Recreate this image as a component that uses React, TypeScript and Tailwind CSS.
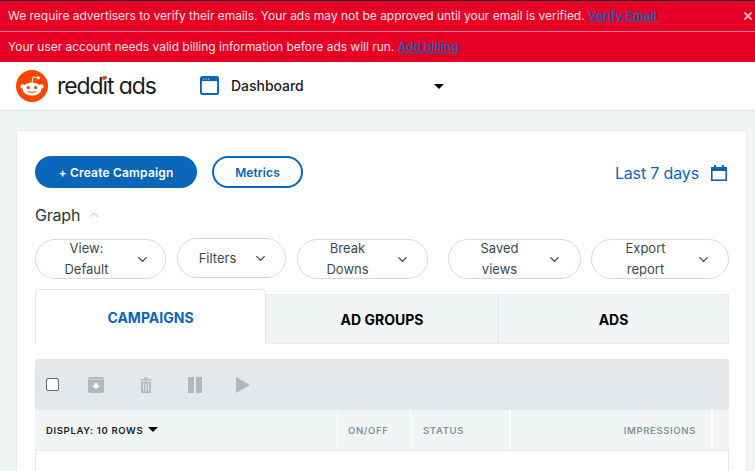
import React from 'react';
import { ChevronDown, ChevronUp, X } from 'lucide-react';

function Pill({ lines, className }: { lines: string[]; className: string }) {
  return (
    <button className={`flex h-10 shrink-0 items-center justify-between rounded-[20px] border border-[#d5dcdf] bg-white text-[13px] leading-[21px] text-[#3c4a50] ${className}`}>
      <span className="flex-1 text-center">
        {lines.map((l) => (
          <span key={l} className="block">{l}</span>
        ))}
      </span>
      <ChevronDown className="h-[15px] w-[15px] text-[#3c4a50]" strokeWidth={2.2} />
    </button>
  );
}

function Snoo() {
  return (
    <svg viewBox="0 0 32 32" className="h-8 w-8 shrink-0">
      <circle cx="16" cy="16" r="16" fill="#ff4500" />
      <circle cx="6.6" cy="16.4" r="2.2" fill="#fff" />
      <circle cx="25.4" cy="16.4" r="2.2" fill="#fff" />
      <ellipse cx="16" cy="19" rx="9.4" ry="6.6" fill="#fff" />
      <path d="M16 12.6 17.2 6.8l4 .9" fill="none" stroke="#fff" strokeWidth="1" />
      <circle cx="22.4" cy="7.8" r="1.6" fill="#fff" />
      <circle cx="12.3" cy="17.6" r="1.7" fill="#ff4500" />
      <circle cx="19.7" cy="17.6" r="1.7" fill="#ff4500" />
      <path d="M12.4 21.4c2 1.5 5.2 1.5 7.2 0" fill="none" stroke="#ff4500" strokeWidth="1" strokeLinecap="round" />
    </svg>
  );
}

export default function App() {
  return (
    <div className="h-[471px] w-[755px] overflow-hidden bg-[#f2f5f6] font-['Inter',sans-serif]">
      <div className="h-px bg-[#22252a]" />

      {/* Alert banners */}
      <div className="bg-[#e60026] text-[12px] tracking-[-0.02px] text-[#fbe3e7]">
        <div className="flex h-[31px] items-center justify-between border-b border-[#f0808f] pl-[8px] pr-[1px]">
          <span>
            We require advertisers to verify their emails. Your ads may not be approved until your email is verified.{' '}
            <a className="font-semibold text-[#1a5fb0] underline">Verify Email</a>
          </span>
          <X className="h-3 w-3 text-[#f6b0ba]" strokeWidth={4} />
        </div>
        <div className="flex h-[30px] items-center pl-[8px]">
          <span>
            Your user account needs valid billing information before ads will run.{' '}
            <a className="font-semibold text-[#1a5fb0] underline">Add billing</a>
          </span>
        </div>
      </div>

      {/* Header */}
      <div className="flex h-[49px] items-center border-b border-[#e2e7ea] bg-white pl-4">
        <Snoo />
        <span className="relative ml-[9px] w-[100px] whitespace-nowrap text-[23px] font-normal tracking-[-1.1px] text-[#1c1c1c] [font-feature-settings:'cv11']">
          reddit ads
          <span className="absolute left-[45px] top-[7px] h-[4px] w-[4px] rounded-full bg-[#ff4500]" />
        </span>
        <svg viewBox="0 0 20 20" className="ml-[43px] mb-[1px] h-[19px] w-[19px]">
          <rect x="1" y="1" width="18" height="18" rx="1.5" fill="#fff" stroke="#0a66b8" strokeWidth="2" />
          <rect x="1" y="1" width="18" height="4.4" fill="#0a66b8" />
          <path d="M3.5 3.2h1M6 3.2h1M8.5 3.2h1" stroke="#fff" strokeWidth="1" />
        </svg>
        <span className="ml-[12px] mb-[2px] w-[203px] text-[14px] font-medium tracking-[-0.03px] text-[#1c1c1c]">Dashboard</span>
        <div className="h-0 w-0 border-x-[5px] border-t-[5px] border-x-transparent border-t-black" />
      </div>

      {/* Card */}
      <div className="mx-4 mt-[19px] mr-2 h-[400px] border border-[#e6ebed] bg-white pl-[18px] pr-[17px] pt-[25px]">
        <div className="flex h-[32px] items-center">
          <button className="h-[32px] w-[162px] rounded-2xl bg-[#0a66b8] pt-[1px] text-[12px] font-semibold tracking-[0.2px] text-white">+ Create Campaign</button>
          <button className="ml-[15px] h-[32px] w-[91px] rounded-2xl border-2 border-[#0a66b8] bg-white pt-[1px] text-[12px] font-semibold tracking-[0.1px] text-[#0a66b8]">Metrics</button>
          <span className="ml-auto mt-[2px] text-[16px] tracking-[-0.15px] text-[#0a66b8]">Last 7 days</span>
          <svg viewBox="0 0 16 16" className="ml-[12px] mr-[2px] mt-[2px] h-[16px] w-[16px]">
            <path d="M3 0h2v2h6V0h2v2h3v14H0V2h3z" fill="#0a66b8" />
            <rect x="1.6" y="6" width="12.8" height="8.4" fill="#fff" />
          </svg>
        </div>

        <div className="mt-[17px] flex h-[20px] items-center text-[16px] tracking-[-0.2px] text-[#2c373c]">
          Graph
          <ChevronUp className="ml-[7px] h-[14px] w-[14px] text-[#a9b5ba]" strokeWidth={1.5} />
        </div>

        <div className="mt-[14px] flex items-start">
          <Pill lines={['View:', 'Default']} className="w-[131px] pl-[2px] pr-[15px]" />
          <Pill lines={['Filters']} className="-mt-px ml-[11px] w-[109px] pl-[4px] pr-[17px]" />
          <Pill lines={['Break', 'Downs']} className="ml-[11px] w-[131px] pl-[2px] pr-[17px]" />
          <Pill lines={['Saved', 'views']} className="ml-[20px] w-[133px] pl-[3px] pr-[18px]" />
          <Pill lines={['Export', 'report']} className="ml-[10px] w-[138px] pl-[3px] pr-[17px]" />
        </div>

        {/* Tabs */}
        <div className="mt-[10px] flex h-[55px] w-[694px] items-end text-[14px] font-bold">
          <div className="flex h-[55px] w-[231px] items-start justify-center rounded-t border border-b-0 border-[#e4e9eb] bg-white pt-[17px] text-[#0a66b8]">CAMPAIGNS</div>
          <div className="flex h-[50px] w-[232px] items-center justify-center border border-[#e8edef] bg-[#f2f5f6] pt-[1px] text-black">AD GROUPS</div>
          <div className="flex h-[50px] w-[231px] items-center justify-center border border-[#e8edef] bg-[#f2f5f6] pt-[1px] text-black">ADS</div>
        </div>

        {/* Table */}
        <div className="mt-[15px] w-[694px]">
          <div className="flex h-[51px] items-center gap-[27px] rounded-t bg-[#e4e8eb] pl-[11px]">
            <input type="checkbox" className="h-[13px] w-[13px] appearance-none rounded-[2px] border border-[#666] bg-white" />
            <svg viewBox="0 0 16 16" className="ml-[2px] h-4 w-4">
              <path d="M2 0h12a2 2 0 0 1 2 2v12a2 2 0 0 1-2 2H2a2 2 0 0 1-2-2V2a2 2 0 0 1 2-2z" fill="#aebabe" />
              <path d="M1 2.6h14" stroke="#c9d2d5" strokeWidth="1" />
              <path d="M6.5 6h3v2.6H12l-4 3.6-4-3.6h2.5z" fill="#fff" />
            </svg>
            <svg viewBox="0 0 12 16" className="ml-[9px] h-4 w-3">
              <path d="M0 2h12v1.4H0zM4 .4h4V2H4zM1 4.4h10V16H1z" fill="#b3bec2" />
              <path d="M3.6 6.4v7.4M6 6.4v7.4M8.4 6.4v7.4" stroke="#e4e8eb" strokeWidth="1" />
            </svg>
            <svg viewBox="0 0 14 16" className="ml-[9px] h-4 w-[14px]">
              <path d="M0 0h6v16H0zM8 0h6v16H8z" fill="#aebabe" />
            </svg>
            <svg viewBox="0 0 14 16" className="ml-[7px] h-4 w-[14px]">
              <path d="M0 0l14 8-14 8z" fill="#aebabe" />
            </svg>
          </div>
          <div className="flex h-[41px] border-b border-[#e4e9eb] bg-white text-[9.5px] font-semibold tracking-[0.65px] text-[#84949b]">
            <div className="flex w-[302px] items-center gap-[5px] bg-[#f2f5f6] pl-[11px] pt-[2px] text-[#1c1c1c]">
              DISPLAY: 10 ROWS
              <span className="mb-[3px] h-0 w-0 border-x-[5px] border-t-[5px] border-x-transparent border-t-black" />
            </div>
            <div className="ml-[1px] flex w-[72px] items-center bg-[#f2f5f6] pl-[10px] pt-[2px]">ON/OFF</div>
            <div className="ml-[1px] flex w-[98px] items-center bg-[#f2f5f6] pl-[12px] pt-[2px]">STATUS</div>
            <div className="ml-[2px] flex w-[200px] items-center justify-end bg-[#f2f5f6] pr-[15px] pt-[2px]">IMPRESSIONS</div>
            <div className="ml-[2px] flex-1 bg-[#f2f5f6]" />
          </div>
          <div className="h-[30px] border-x border-[#e4e9eb] bg-white" />
        </div>
      </div>
    </div>
  );
}
